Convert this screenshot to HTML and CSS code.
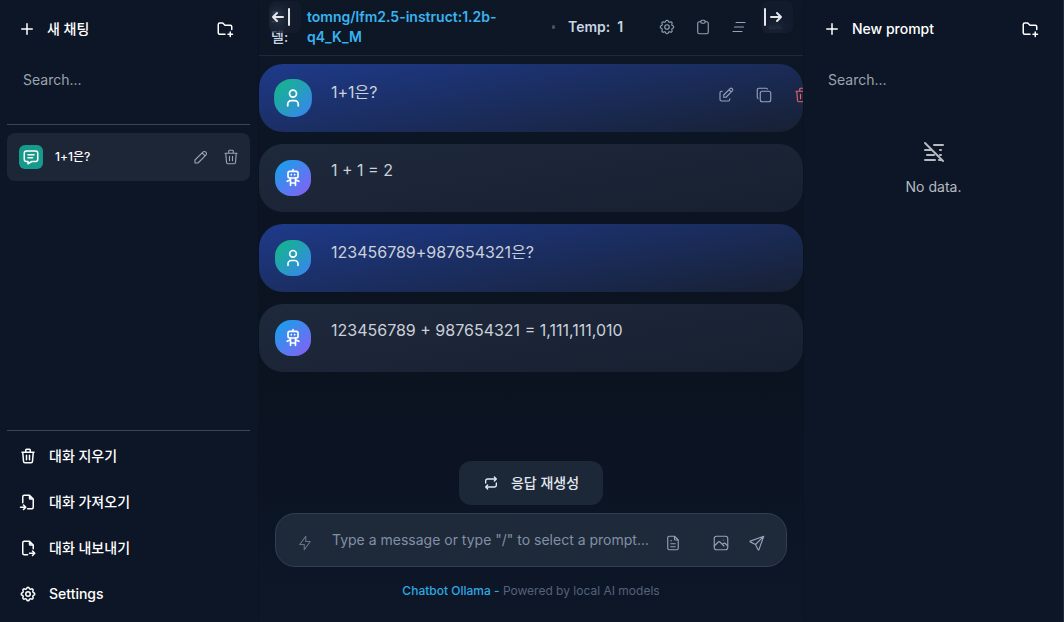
FILE: index.html
```html
<!DOCTYPE html>
<html lang="ko">
<head>
  <meta charset="UTF-8" />
  <meta name="viewport" content="width=device-width, initial-scale=1.0"/>
  <title>Chatbot Ollama</title>
  <link rel="stylesheet" href="styles.css">
</head>
<body>
  <svg class="sprite" aria-hidden="true">
    <symbol id="plus" viewBox="0 0 24 24"><path d="M12 5v14M5 12h14"/></symbol>
    <symbol id="folder-plus" viewBox="0 0 24 24"><path d="M12 19h-7a2 2 0 0 1 -2 -2v-11a2 2 0 0 1 2 -2h4l3 3h7a2 2 0 0 1 2 2v3.5M16 19h6M19 16v6"/></symbol>
    <symbol id="message" viewBox="0 0 24 24"><path d="M8 9h8M8 13h6M18 4a3 3 0 0 1 3 3v8a3 3 0 0 1 -3 3h-5l-5 3v-3h-2a3 3 0 0 1 -3 -3v-8a3 3 0 0 1 3 -3h12z"/></symbol>
    <symbol id="pencil" viewBox="0 0 24 24"><path d="M4 20h4l10.5 -10.5a2.828 2.828 0 1 0 -4 -4l-10.5 10.5v4M13.5 6.5l4 4"/></symbol>
    <symbol id="trash" viewBox="0 0 24 24"><path d="M4 7h16M10 11v6M14 11v6M5 7l1 12a2 2 0 0 0 2 2h8a2 2 0 0 0 2 -2l1 -12M9 7v-3a1 1 0 0 1 1 -1h4a1 1 0 0 1 1 1v3"/></symbol>
    <symbol id="import" viewBox="0 0 24 24"><path d="M14 3v4a1 1 0 0 0 1 1h4M5 13v-8a2 2 0 0 1 2 -2h7l5 5v11a2 2 0 0 1 -2 2h-5.5M2 19h7M6 16l3 3l-3 3"/></symbol>
    <symbol id="export" viewBox="0 0 24 24"><path d="M14 3v4a1 1 0 0 0 1 1h4M11.5 21h-4.5a2 2 0 0 1 -2 -2v-14a2 2 0 0 1 2 -2h7l5 5v5M14 19h7M18 16l3 3l-3 3"/></symbol>
    <symbol id="settings" viewBox="0 0 24 24"><path d="M10.325 4.317c.426 -1.756 2.924 -1.756 3.35 0a1.724 1.724 0 0 0 2.573 1.066c1.543 -.94 3.31 .826 2.37 2.37a1.724 1.724 0 0 0 1.065 2.572c1.756 .426 1.756 2.924 0 3.35a1.724 1.724 0 0 0 -1.066 2.573c.94 1.543 -.826 3.31 -2.37 2.37a1.724 1.724 0 0 0 -2.572 1.065c-.426 1.756 -2.924 1.756 -3.35 0a1.724 1.724 0 0 0 -2.573 -1.066c-1.543 .94 -3.31 -.826 -2.37 -2.37a1.724 1.724 0 0 0 -1.065 -2.572c-1.756 -.426 -1.756 -2.924 0 -3.35a1.724 1.724 0 0 0 1.066 -2.573c-.94 -1.543 .826 -3.31 2.37 -2.37c1 .608 2.296 .07 2.572 -1.065z"/><circle cx="12" cy="12" r="3"/></symbol>
    <symbol id="user" viewBox="0 0 24 24"><circle cx="12" cy="7" r="4"/><path d="M6 21v-2a4 4 0 0 1 4 -4h4a4 4 0 0 1 4 4v2"/></symbol>
    <symbol id="robot" viewBox="0 0 24 24"><rect x="6" y="4" width="12" height="8" rx="2"/><path d="M12 2v2M9 12v9M15 12v9M5 16l4 -2M15 14l4 2M9 18h6M10 8v.01M14 8v.01"/></symbol>
    <symbol id="clipboard" viewBox="0 0 24 24"><path d="M9 5h-2a2 2 0 0 0 -2 2v12a2 2 0 0 0 2 2h10a2 2 0 0 0 2 -2v-12a2 2 0 0 0 -2 -2h-2"/><rect x="9" y="3" width="6" height="4" rx="2"/></symbol>
    <symbol id="clear" viewBox="0 0 24 24"><path d="M8 6h12M6 12h12M4 18h12"/></symbol>
    <symbol id="dots" viewBox="0 0 24 24"><circle cx="6" cy="12" r="2"/><circle cx="12" cy="12" r="2"/><circle cx="18" cy="12" r="2"/></symbol>
    <symbol id="edit" viewBox="0 0 24 24"><path d="M7 7h-1a2 2 0 0 0 -2 2v9a2 2 0 0 0 2 2h9a2 2 0 0 0 2 -2v-1M20.385 6.585a2.1 2.1 0 0 0 -2.97 -2.97l-8.415 8.385v3h3l8.385 -8.415zM16 5l3 3"/></symbol>
    <symbol id="copy" viewBox="0 0 24 24"><rect x="7" y="7" width="14" height="14" rx="2.667"/><path d="M4.012 16.737a2.005 2.005 0 0 1 -1.012 -1.737v-10c0 -1.1 .9 -2 2 -2h10c.75 0 1.158 .385 1.5 1"/></symbol>
    <symbol id="repeat" viewBox="0 0 24 24"><path d="M4 12v-3a3 3 0 0 1 3 -3h13m-3 -3l3 3l-3 3M20 12v3a3 3 0 0 1 -3 3h-13m3 3l-3 -3l3 -3"/></symbol>
    <symbol id="bolt" viewBox="0 0 24 24"><path d="M13 3v7h6l-8 11v-7h-6l8 -11"/></symbol>
    <symbol id="file" viewBox="0 0 24 24"><path d="M14 3v4a1 1 0 0 0 1 1h4M17 21h-10a2 2 0 0 1 -2 -2v-14a2 2 0 0 1 2 -2h7l5 5v11a2 2 0 0 1 -2 2zM9 9h1M9 13h6M9 17h6"/></symbol>
    <symbol id="photo" viewBox="0 0 24 24"><rect x="3" y="3" width="18" height="18" rx="3"/><path d="M15 8h.01M3 16l5 -5c.928 -.893 2.072 -.893 3 0l5 5M14 14l1 -1c.928 -.893 2.072 -.893 3 0l3 3"/></symbol>
    <symbol id="send" viewBox="0 0 24 24"><path d="M10 14l11 -11M21 3l-6.5 18a.55 .55 0 0 1 -1 0l-3.5 -7l-7 -3.5a.55 .55 0 0 1 0 -1l18 -6.5"/></symbol>
    <symbol id="bar-left" viewBox="0 0 24 24"><path d="M4 12h10M4 12l4 4M4 12l4 -4M20 4v16"/></symbol>
    <symbol id="bar-right" viewBox="0 0 24 24"><path d="M20 12h-10M20 12l-4 4M20 12l-4 -4M4 4v16"/></symbol>
    <symbol id="no-data" viewBox="0 0 24 24"><path d="M3 3l18 18M12 5h9M3 10h7M18 10h1M5 15h7M18 15h1M3 20h10M17 20h2"/></symbol>
  </svg>

  <div class="app">
    <aside class="sidebar sidebar-left">
      <div class="sidebar-top">
        <button class="new-btn"><svg class="icon icon-18"><use href="#plus"/></svg>새 채팅</button>
        <button class="icon-btn" aria-label="New folder"><svg class="icon icon-18"><use href="#folder-plus"/></svg></button>
      </div>
      <input class="search" type="text" placeholder="Search..." aria-label="Search chats">
      <div class="chat-list">
        <div class="chat-item">
          <span class="chat-badge"><svg class="icon icon-18"><use href="#message"/></svg></span>
          <a class="chat-title" href="#">1+1은?</a>
          <button class="icon-btn muted" aria-label="Rename"><svg class="icon icon-18"><use href="#pencil"/></svg></button>
          <button class="icon-btn muted" aria-label="Delete"><svg class="icon icon-18"><use href="#trash"/></svg></button>
        </div>
      </div>
      <nav class="sidebar-menu">
        <button class="menu-btn"><svg class="icon icon-18"><use href="#trash"/></svg>대화 지우기</button>
        <button class="menu-btn"><svg class="icon icon-18"><use href="#import"/></svg>대화 가져오기</button>
        <button class="menu-btn"><svg class="icon icon-18"><use href="#export"/></svg>대화 내보내기</button>
        <button class="menu-btn"><svg class="icon icon-18"><use href="#settings"/></svg>Settings</button>
      </nav>
    </aside>

    <main class="chat">
      <button class="toggle toggle-left" aria-label="Hide chats"><svg class="icon icon-24"><use href="#bar-left"/></svg></button>
      <button class="toggle toggle-right" aria-label="Hide prompts"><svg class="icon icon-24"><use href="#bar-right"/></svg></button>
      <header class="chat-header">
        <span class="model-label">모델:</span>
        <span class="model-name">tomng/lfm2.5-instruct:1.2b-q4_K_M</span>
        <span class="dot"></span>
        <span class="temp">Temp:&nbsp; 1</span>
        <div class="header-actions">
          <button class="icon-btn" aria-label="Model settings"><svg class="icon icon-18"><use href="#settings"/></svg></button>
          <button class="icon-btn" aria-label="Clipboard"><svg class="icon icon-18"><use href="#clipboard"/></svg></button>
          <button class="icon-btn" aria-label="Clear chat"><svg class="icon icon-18"><use href="#clear"/></svg></button>
          <button class="icon-btn" aria-label="More"><svg class="icon icon-18"><use href="#dots"/></svg></button>
        </div>
      </header>

      <section class="messages">
        <article class="message user active">
          <span class="avatar"><svg class="icon icon-20"><use href="#user"/></svg></span>
          <p class="text">1+1은?</p>
          <div class="message-actions">
            <button class="icon-btn" aria-label="Edit"><svg class="icon icon-18"><use href="#edit"/></svg></button>
            <button class="icon-btn" aria-label="Copy"><svg class="icon icon-18"><use href="#copy"/></svg></button>
            <button class="icon-btn danger" aria-label="Delete message"><svg class="icon icon-18"><use href="#trash"/></svg></button>
          </div>
        </article>
        <article class="message bot">
          <span class="avatar"><svg class="icon icon-20"><use href="#robot"/></svg></span>
          <p class="text">1 + 1 = 2</p>
        </article>
        <article class="message user">
          <span class="avatar"><svg class="icon icon-20"><use href="#user"/></svg></span>
          <p class="text">123456789+987654321은?</p>
        </article>
        <article class="message bot">
          <span class="avatar"><svg class="icon icon-20"><use href="#robot"/></svg></span>
          <p class="text">123456789 + 987654321 = 1,111,111,010</p>
        </article>
      </section>

      <footer class="composer">
        <button class="regenerate"><svg class="icon icon-16"><use href="#repeat"/></svg>응답 재생성</button>
        <form class="input-box">
          <button type="button" class="icon-btn faint" aria-label="Prompts"><svg class="icon icon-18"><use href="#bolt"/></svg></button>
          <input class="message-input" type="text" placeholder='Type a message or type "/" to select a prompt...' aria-label="Message">
          <button type="button" class="icon-btn attach" aria-label="Attach file"><svg class="icon icon-18"><use href="#file"/></svg></button>
          <button type="button" class="icon-btn" aria-label="Attach image"><svg class="icon icon-18"><use href="#photo"/></svg></button>
          <button type="submit" class="icon-btn" aria-label="Send"><svg class="icon icon-18"><use href="#send"/></svg></button>
        </form>
        <p class="credit"><a href="#">Chatbot Ollama -</a> Powered by local AI models</p>
      </footer>
    </main>

    <aside class="sidebar sidebar-right">
      <div class="sidebar-top">
        <button class="new-btn"><svg class="icon icon-18"><use href="#plus"/></svg>New prompt</button>
        <button class="icon-btn" aria-label="New prompt folder"><svg class="icon icon-18"><use href="#folder-plus"/></svg></button>
      </div>
      <input class="search" type="text" placeholder="Search..." aria-label="Search prompts">
      <div class="empty">
        <svg class="icon icon-24"><use href="#no-data"/></svg>
        <span>No data.</span>
      </div>
    </aside>
  </div>
</body>
</html>
```
FILE: styles.css
```css
* {
  box-sizing: border-box;
}
body {
  margin: 0;
  background: #0c1322;
  color: #fff;
  font-family: Inter, "Noto Sans CJK KR", sans-serif;
  font-size: 14px;
  line-height: 20px;
}
button, input {
  font: inherit;
  color: inherit;
  background: none;
  border: none;
  padding: 0;
  outline: none;
}
button {
  cursor: pointer;
}
a {
  color: inherit;
  text-decoration: none;
}
p {
  margin: 0;
}
.sprite {
  display: none;
}
.icon {
  display: block;
  flex: none;
  fill: none;
  stroke: currentColor;
  stroke-width: 2;
  stroke-linecap: round;
  stroke-linejoin: round;
}
.icon-16 { width: 16px; height: 16px; }
.icon-18 { width: 18px; height: 18px; }
.icon-20 { width: 20px; height: 20px; }
.icon-24 { width: 24px; height: 24px; }
.icon-btn {
  display: flex;
  flex: none;
}
.app {
  display: grid;
  grid-template-columns: 259px minmax(0, 1fr) 261px;
  min-height: 100vh;
}

/* sidebars */
.sidebar {
  display: flex;
  flex-direction: column;
  padding: 8px 8px 7px;
  background: #0d1626;
}
.sidebar-left {
  padding-left: 7px;
  border-right: 1px solid #0b1220;
}
.sidebar-right {
  border-left: 1px solid #0b1220;
  border-right: 1px solid #1f2b38;
}
.sidebar-top {
  display: flex;
  align-items: center;
  justify-content: space-between;
  height: 42px;
  padding: 0 16px 0 11px;
}
.new-btn {
  display: flex;
  align-items: center;
  gap: 11px;
  font-weight: 500;
}
.search {
  width: 100%;
  height: 42px;
  margin-top: 8px;
  padding: 0 16px;
}
.search::placeholder {
  color: #9ca3af;
  opacity: 1;
}
.chat-list {
  flex: 1;
  margin-top: 24px;
  padding-top: 8px;
  border-top: 1px solid #3c4554;
}
.chat-item {
  display: flex;
  align-items: center;
  gap: 12px;
  height: 48px;
  padding: 0 10px 0 12px;
  border-radius: 8px;
  background: #1c2637;
}
.chat-badge {
  display: grid;
  place-items: center;
  width: 24px;
  height: 24px;
  border-radius: 6px;
  background: #159a8c;
}
.chat-title {
  flex: 1;
  font-size: 12px;
  font-weight: 500;
}
.muted {
  color: #9ca3af;
}
.muted .icon {
  stroke-width: 1.5;
}
.sidebar-menu {
  display: flex;
  flex-direction: column;
  gap: 4px;
  padding-top: 4px;
  border-top: 1px solid #3c4554;
}
.menu-btn {
  display: flex;
  align-items: center;
  gap: 12px;
  height: 42px;
  padding: 0 12px;
  font-weight: 500;
}
.empty {
  display: flex;
  flex-direction: column;
  align-items: center;
  gap: 13px;
  margin-top: 40px;
  color: #b6bac1;
}

/* chat */
.chat {
  position: relative;
  display: flex;
  flex-direction: column;
  background: linear-gradient(#0d1726, #0b1220 60%, #0d1728);
}
.toggle {
  position: absolute;
  top: 1px;
  display: flex;
  align-items: center;
  width: 32px;
  height: 32px;
  border-radius: 6px;
  background: rgba(24, 32, 50, 0.5);
  backdrop-filter: blur(6px);
  color: #e5e7eb;
  z-index: 2;
}
.toggle-left { left: 10px; }
.toggle-right { right: 10px; }
.chat-header {
  display: flex;
  align-items: center;
  height: 56px;
  padding: 0 19px 2px 12px;
  border-bottom: 1px solid #1b2840;
  font-weight: 600;
  color: #cbd5e1;
}
.model-label {
  width: 20px;
  margin-right: 16px;
  font-weight: 500;
}
.model-name {
  flex: 1;
  max-width: 220px;
  color: #38b4f0;
}
.dot {
  width: 3px;
  height: 4px;
  margin: 0 13px 0 25px;
  border-radius: 2px;
  background: #475569;
}
.temp {
  white-space: nowrap;
}
.header-actions {
  display: flex;
  gap: 18px;
  margin-left: auto;
  color: #94a3b8;
}
.header-actions .icon,
.message-actions .icon,
.input-box .icon {
  stroke-width: 1.5;
}
.messages {
  display: flex;
  flex: 1;
  flex-direction: column;
  gap: 12px;
  padding-top: 8px;
}
.message {
  display: flex;
  align-items: flex-start;
  gap: 20px;
  height: 68px;
  padding: 16px;
  overflow: hidden;
  border-radius: 24px;
  font-size: 16px;
  line-height: 24px;
  color: #cbd0d9;
}
.user {
  background: linear-gradient(170deg, #1e3a8a, #172033);
}
.bot {
  background: linear-gradient(170deg, #1e293b, #172031);
}
.avatar {
  display: grid;
  flex: none;
  place-items: center;
  width: 36px;
  height: 36px;
  border-radius: 16px;
  color: #fff;
}
.user .avatar {
  background: linear-gradient(135deg, #10b981, #3b82f6);
}
.bot .avatar {
  background: linear-gradient(135deg, #0ea5e9, #8b5cf6);
}
.active .avatar {
  transform: scale(1.05);
}
.text {
  flex: 1;
}
.bot .text {
  margin-top: -2px;
}
.message-actions {
  display: flex;
  gap: 20px;
  margin: 6px -24px 0 0;
  color: #94a3b8;
}
.danger {
  color: #ef6262;
}

/* bottom area */
.composer {
  display: flex;
  flex-direction: column;
  align-items: center;
  padding: 0 16px 21px;
}
.regenerate {
  display: flex;
  align-items: center;
  gap: 12px;
  height: 44px;
  padding: 0 24px;
  border-radius: 12px;
  background: #1c2738;
  color: #e2e8f0;
  font-weight: 500;
}
.input-box {
  display: flex;
  align-items: center;
  width: 100%;
  height: 54px;
  margin-top: 8px;
  padding: 0 20px;
  border: 1px solid #303f52;
  border-radius: 20px;
  background: #1e293a;
  color: #94a3b8;
}
.input-box .icon-btn {
  margin: 6px 0 0 18px;
}
.input-box .icon-btn.faint {
  margin-left: 0;
  color: #64748b;
}
.input-box .icon-btn.attach {
  margin: 6px 12px 0 0;
}
.message-input {
  flex: 1;
  min-width: 0;
  margin-left: 18px;
}
.message-input::placeholder {
  color: #8290a5;
  opacity: 1;
}
.credit {
  margin-top: 14px;
  font-size: 12px;
  color: #55627a;
}
.credit a {
  color: #2fa8e4;
  font-weight: 500;
}
```
